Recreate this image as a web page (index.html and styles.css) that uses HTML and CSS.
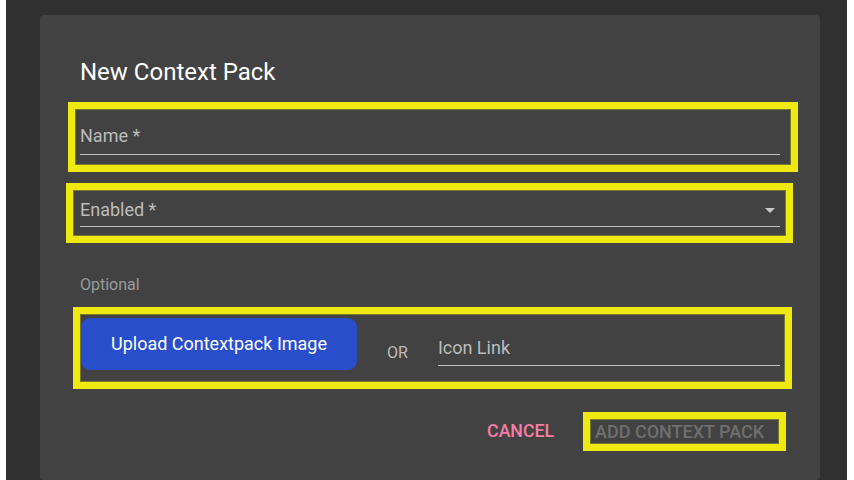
FILE: index.html
```html
<!DOCTYPE html>
<html lang="en">
<head>
<meta charset="utf-8">
<title>New Context Pack</title>
<link rel="stylesheet" href="styles.css">
</head>
<body>
<div class="backdrop">
  <div class="dialog">
    <h2 class="title">New Context Pack</h2>

    <div class="hl hl-name">
      <div class="field field-name">
        <span class="label">Name *</span>
      </div>
    </div>

    <div class="hl hl-enabled">
      <div class="field field-enabled">
        <span class="label">Enabled *</span>
        <svg class="arrow" width="10" height="5" viewBox="0 0 10 5"><path d="M0 0h10L5 5z" fill="#c8c8c8"/></svg>
      </div>
    </div>

    <div class="optional">Optional</div>

    <div class="hl hl-upload">
      <div class="upload-row">
        <button class="upload-btn">Upload Contextpack Image</button>
        <span class="or">OR</span>
        <div class="field field-icon">
          <span class="label">Icon Link</span>
        </div>
      </div>
    </div>

    <div class="actions">
      <button class="btn-cancel">CANCEL</button>
      <div class="hl hl-add">
        <button class="btn-add">ADD CONTEXT PACK</button>
      </div>
    </div>
  </div>
</div>
</body>
</html>
```

FILE: styles.css
```css
* { box-sizing: border-box; }

html, body {
  margin: 0;
  padding: 0;
  background: #ffffff;
  height: 480px;
  overflow: hidden;
}

body {
  font-family: Roboto, "Liberation Sans", sans-serif;
}

.backdrop {
  margin: 0 7px 0 6px;
  height: 480px;
  background: #303030;
  padding: 15px 27px 0 34px;
}

.dialog {
  width: 780px;
  height: 465px;
  background: #424242;
  border-radius: 4px;
  padding-top: 41px;
  display: flex;
  flex-direction: column;
  align-items: flex-start;
}

.title {
  margin: 0 0 0 40px;
  font-size: 24px;
  line-height: 32px;
  font-weight: 400;
  color: #ffffff;
}

.hl {
  border: 7px solid #eeea10;
  box-shadow: inset 0 0 0 1px #77772e;
}

.hl-name {
  margin: 14px 0 0 28px;
  width: 730px;
  height: 70px;
  padding: 0 11px 0 5px;
}

.field {
  border-bottom: 1px solid #c4c4c4;
  color: #bdbdbd;
}

.label {
  font-size: 18px;
  line-height: 21px;
  color: #bcbcbc;
}

.field-name {
  padding: 16px 0 8px;
}

.field-name .label { display: block; }

.hl-enabled {
  margin: 11px 0 0 26px;
  width: 727px;
  height: 60px;
  padding: 0 6px 0 7px;
}

.field-enabled {
  padding: 9px 0 6px;
  display: flex;
  align-items: center;
  justify-content: space-between;
}

.arrow {
  margin-right: 5px;
  margin-top: 1px;
}

.optional {
  margin: 32px 0 0 40px;
  font-size: 16px;
  line-height: 19px;
  color: #9a9a9a;
}

.hl-upload {
  margin: 13px 0 0 33px;
  width: 719px;
  height: 82px;
  padding: 0 5px 0 0;
}

.upload-row {
  display: flex;
  align-items: flex-start;
}

.upload-btn {
  margin: 4px 0 0 1px;
  width: 276px;
  height: 52px;
  border: none;
  border-radius: 9px;
  background: #284ecb;
  color: #ffffff;
  font-family: Roboto, "Liberation Sans", sans-serif;
  font-size: 18px;
  padding: 0 0 2px;
}

.or {
  margin: 29px 0 0 30px;
  font-size: 16px;
  line-height: 19px;
  color: #bdbdbd;
}

.field-icon {
  flex: 1;
  margin-left: 30px;
  padding: 23px 0 7px;
}

.field-icon .label { display: block; }

.actions {
  align-self: stretch;
  margin: 23px 34px 0 0;
  display: flex;
  justify-content: flex-end;
  align-items: center;
}

.btn-cancel {
  background: none;
  border: none;
  padding: 0;
  margin: 0 29px 0 0;
  font-family: Roboto, "Liberation Sans", sans-serif;
  font-size: 17.7px;
  font-weight: 500;
  color: #f47ea6;
  line-height: 25px;
}

.hl-add {
  width: 203px;
  height: 39px;
  padding: 0 0 0 5px;
}

.btn-add {
  background: none;
  border: none;
  padding: 0;
  font-family: Roboto, "Liberation Sans", sans-serif;
  font-size: 18px;
  font-weight: 500;
  color: #6f6f6f;
  line-height: 25px;
}
```
